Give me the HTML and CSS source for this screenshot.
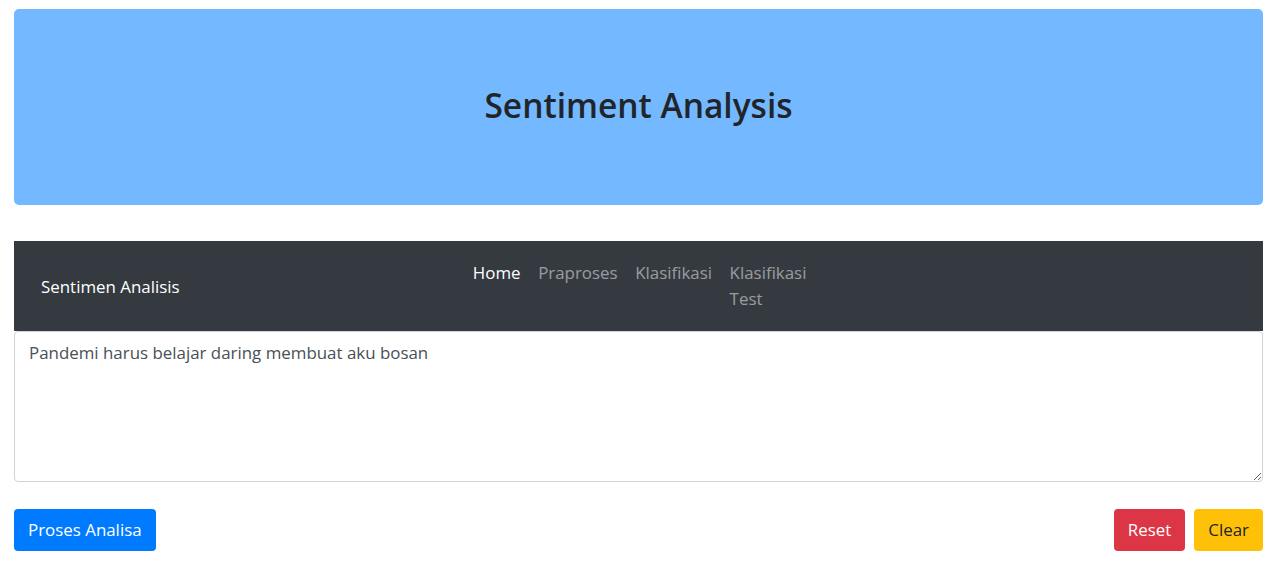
FILE: index.html
```html
<!DOCTYPE html>
<html lang="id">
<head>
<meta charset="utf-8">
<title>Sentiment Analysis</title>
<link rel="stylesheet" href="styles.css">
</head>
<body>
<div class="page">
  <header class="jumbo">
    <h1 class="jumbo-title">Sentiment Analysis</h1>
  </header>
  <nav class="navbar">
    <a class="brand" href="#">Sentimen Analisis</a>
    <ul class="nav">
      <li class="nav-item"><a class="nav-link active" href="#">Home</a></li>
      <li class="nav-item"><a class="nav-link" href="#">Praproses</a></li>
      <li class="nav-item"><a class="nav-link" href="#">Klasifikasi</a></li>
      <li class="nav-item"><a class="nav-link" href="#">Klasifikasi Test</a></li>
    </ul>
  </nav>
  <form class="form">
    <textarea class="text-input">Pandemi harus belajar daring membuat aku bosan</textarea>
    <div class="actions">
      <button type="button" class="btn btn-primary">Proses Analisa</button>
      <div class="actions-right">
        <button type="reset" class="btn btn-danger">Reset</button>
        <button type="button" class="btn btn-warning">Clear</button>
      </div>
    </div>
  </form>
</div>
</body>
</html>
```

FILE: styles.css
```css
* { box-sizing: border-box; }
html, body { margin: 0; padding: 0; background: #fff; }
body {
  font-family: "Open Sans", "Noto Sans", sans-serif;
  font-size: 16.9px;
  line-height: 26.4px;
  color: #212529;
}
.page { padding: 9px 10px 0 14px; }
.jumbo {
  background: #74b8ff;
  border-radius: 5px;
  height: 196px;
  display: flex;
  align-items: center;
  justify-content: center;
  margin-bottom: 36px;
}
.jumbo-title {
  margin: 0;
  font-size: 33.5px;
  font-weight: 600;
  line-height: 1.2;
  color: #212529;
  padding-bottom: 4px;
}
.navbar {
  background: #343a40;
  height: 90px;
  display: flex;
  align-items: flex-start;
  padding: 0 0 0 27px;
}
.brand {
  color: #fff;
  text-decoration: none;
  align-self: center;
  width: 423px;
  padding-top: 2px;
}
.nav {
  list-style: none;
  margin: 0;
  padding: 18.5px 0 0 0;
  display: flex;
  width: 364px;
}
.nav-link {
  display: block;
  padding: 0 8.8px;
  color: rgba(255,255,255,.5);
  text-decoration: none;
}
.nav-link.active { color: #fff; }
.form { margin: 0; }
.text-input {
  display: block;
  width: 100%;
  height: 151px;
  margin: 0;
  padding: 8px 14px;
  border: 1px solid #ced4da;
  border-radius: 4px;
  font: inherit;
  color: #495057;
  resize: vertical;
}
.actions {
  display: flex;
  justify-content: space-between;
  margin-top: 27px;
}
.actions-right { display: flex; gap: 9px; }
.btn {
  font: inherit;
  height: 42px;
  padding: 0 13px;
  border: 1px solid transparent;
  border-radius: 4px;
  cursor: pointer;
}
.btn-primary { background: #007bff; color: #fff; }
.btn-danger { background: #dc3545; color: #fff; }
.btn-warning { background: #ffc107; color: #212529; }
```
